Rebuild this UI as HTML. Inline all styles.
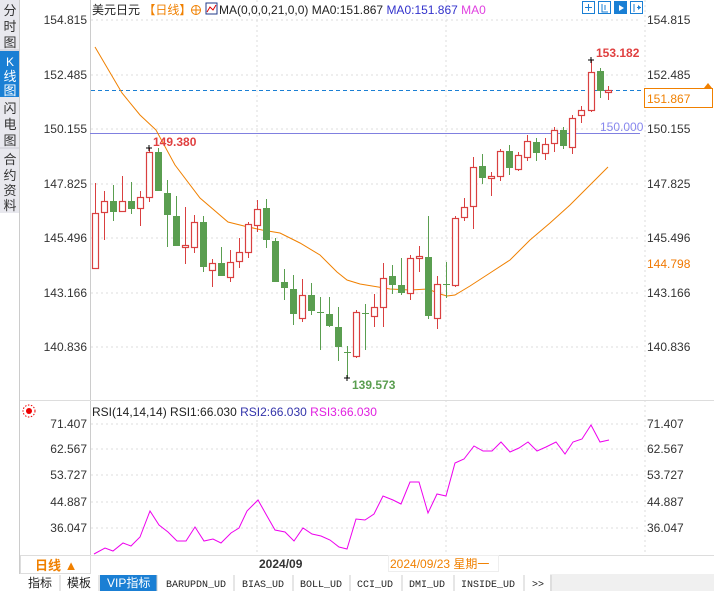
<!DOCTYPE html>
<html><head><meta charset="utf-8"><style>
body{margin:0;width:714px;height:591px;overflow:hidden;background:#fff;font-family:"Liberation Sans","Noto Sans CJK SC",sans-serif;}
svg{position:absolute;left:0;top:0}
text{font-family:"Liberation Sans","Noto Sans CJK SC",sans-serif;font-size:12px}
</style></head><body>
<svg width="714" height="591" viewBox="0 0 714 591">
<rect x="0" y="0" width="19" height="213" fill="#e8e8ee"/>
<rect x="0" y="51" width="19" height="46" fill="#1a7fd4"/>
<line x1="0" y1="50" x2="19" y2="50" stroke="#c8c8d0"/><line x1="0" y1="148" x2="19" y2="148" stroke="#c8c8d0"/>
<line x1="19.5" y1="0" x2="19.5" y2="574" stroke="#ccc"/>
<g font-size="13" fill="#333" text-anchor="middle">
<text x="10" y="15" style="font-size:13px">分</text><text x="10" y="31" style="font-size:13px">时</text><text x="10" y="47" style="font-size:13px">图</text>
<text x="10" y="66" style="font-size:12px" fill="#fff">K</text><text x="10" y="81" style="font-size:13px" fill="#fff">线</text><text x="10" y="95" style="font-size:13px" fill="#fff">图</text>
<text x="10" y="113" style="font-size:13px">闪</text><text x="10" y="129" style="font-size:13px">电</text><text x="10" y="145" style="font-size:13px">图</text>
<text x="10" y="164" style="font-size:13px">合</text><text x="10" y="180" style="font-size:13px">约</text><text x="10" y="195" style="font-size:13px">资</text><text x="10" y="210" style="font-size:13px">料</text>
</g>
<line x1="90.5" y1="0" x2="90.5" y2="574" stroke="#ccc"/>
<line x1="20" y1="400.5" x2="714" y2="400.5" stroke="#ddd"/>
<g stroke="#ddd" stroke-dasharray="2,3">
<line x1="91" y1="20" x2="640" y2="20"/><line x1="91" y1="75" x2="640" y2="75"/><line x1="91" y1="129" x2="640" y2="129"/><line x1="91" y1="184" x2="640" y2="184"/><line x1="91" y1="238" x2="640" y2="238"/><line x1="91" y1="293" x2="640" y2="293"/><line x1="91" y1="347" x2="640" y2="347"/>
<line x1="91" y1="424" x2="640" y2="424"/><line x1="91" y1="449" x2="640" y2="449"/><line x1="91" y1="475" x2="640" y2="475"/><line x1="91" y1="502" x2="640" y2="502"/><line x1="91" y1="528" x2="640" y2="528"/>
<line x1="257" y1="0" x2="257" y2="553"/><line x1="446" y1="0" x2="446" y2="553"/><line x1="645" y1="0" x2="645" y2="553"/>
</g>
<g fill="#333" text-anchor="end">
<text x="87" y="24">154.815</text><text x="87" y="79">152.485</text><text x="87" y="133">150.155</text><text x="87" y="188">147.825</text><text x="87" y="242">145.496</text><text x="87" y="297">143.166</text><text x="87" y="351">140.836</text>
<text x="87" y="428">71.407</text><text x="87" y="453">62.567</text><text x="87" y="479">53.727</text><text x="87" y="506">44.887</text><text x="87" y="532">36.047</text>
</g>
<g fill="#333">
<text x="647" y="24">154.815</text><text x="647" y="79">152.485</text><text x="647" y="133">150.155</text><text x="647" y="188">147.825</text><text x="647" y="242">145.496</text><text x="647" y="297">143.166</text><text x="647" y="351">140.836</text>
<text x="647" y="428">71.407</text><text x="647" y="453">62.567</text><text x="647" y="479">53.727</text><text x="647" y="506">44.887</text><text x="647" y="532">36.047</text>
</g>
<text x="647" y="268" fill="#f07800">144.798</text>
<text x="92" y="14" fill="#222">美元日元 <tspan fill="#f08000">【日线】</tspan></text>
<circle cx="196" cy="10" r="4.5" fill="none" stroke="#f08000"/><line x1="191" y1="10" x2="201" y2="10" stroke="#f08000"/><line x1="196" y1="5" x2="196" y2="15" stroke="#f08000"/>
<rect x="206" y="3" width="11" height="11" fill="#fff" stroke="#223a8a"/><polyline points="207,12 210,7 213,10 216,5" fill="none" stroke="#d00"/>
<text x="219" y="14" fill="#222">MA(0,0,0,21,0,0) MA0:151.867 <tspan fill="#3333cc">MA0:151.867</tspan> <tspan fill="#e040e0">MA0</tspan></text>
<g fill="none" stroke="#1a7fd4">
<rect x="582.5" y="1.5" width="12" height="12"/><rect x="598.5" y="1.5" width="12" height="12"/><rect x="614.5" y="1.5" width="12" height="12" fill="#1a7fd4"/><rect x="630.5" y="1.5" width="12" height="12"/>
<path d="M588.5 4v7M585 7.5h7M602 4v8h6M605 5v5M618 4v8h6M634 4v8M637 7.5h4" /></g>
<path d="M619 5l5 3-5 3z" fill="#fff"/><path d="M638 5l3 2.5-3 2.5z" fill="#1a7fd4"/>
<line x1="91" y1="90.5" x2="705" y2="90.5" stroke="#1a7fd4" stroke-dasharray="4,3"/>
<line x1="90" y1="133.5" x2="640" y2="133.5" stroke="#8080e0"/>
<text x="600" y="131" fill="#8888ee">150.000</text>
<rect x="644.5" y="88.5" width="68" height="19" fill="#fff" stroke="#f08000"/>
<text x="647" y="103" fill="#f08000">151.867</text>
<path d="M704 88l4-5 4 5z" fill="#f08000"/>
<polyline fill="none" stroke="#f08000" points="95,47 122,93 140,115 156,130 175,165 200,198 228,222 244,226 262,230 280,233 300,243 320,255 337,272 347,280 360,284 390,289 410,290 428,289 440,294 447,296 455,295 470,286 490,273 510,260 530,240 550,223 570,205 590,185 608,167"/>
<g id="c"></g>
<circle cx="29" cy="411" r="3" fill="#e00"/><circle cx="29" cy="411" r="6" fill="none" stroke="#e00" stroke-dasharray="1.5,1.5"/>
<text x="92" y="416" fill="#222">RSI(14,14,14) RSI1:66.030 <tspan fill="#3333aa">RSI2:66.030</tspan> <tspan fill="#e020e0">RSI3:66.030</tspan></text>
<polyline fill="none" stroke="#ee00ee" points="94,554 105,548 113,551 123,543 131,546 140,537 150,511 159,525 168,532 177,541 186,541 195,527 204,541 213,539 221,543 231,533 239,528 247,511 258,500 267,516 275,530 285,532 294,541 303,528 312,534 321,536 330,540 339,547 347,549 356,519 365,520 374,514 383,496 393,500 401,504 410,482 419,482 428,513 437,494 446,496 455,463 464,459 474,446 483,451 492,451 501,442 510,452 519,448 528,442 537,451 546,447 556,442 565,454 573,442 582,439 591,425 600,442 609,440"/>
<line x1="20" y1="555.5" x2="714" y2="555.5" stroke="#ddd"/>
<rect x="20.5" y="555.5" width="70" height="18" fill="#fff" stroke="#ddd"/>
<text x="35" y="570" fill="#f08000" style="font-size:13px;font-weight:bold">日线 ▲</text>
<text x="259" y="568" fill="#333" style="font-weight:bold">2024/09</text>
<rect x="388.5" y="555.5" width="110" height="16" fill="#fff" stroke="#eee"/>
<text x="390" y="568" fill="#f08000">2024/09/23 星期一</text>
<rect x="20" y="574" width="694" height="17" fill="#f0f0f0"/>
<rect x="20" y="574" width="530" height="17" fill="#fff"/>
<rect x="100" y="575" width="57" height="16" fill="#1a7fd4"/>
<g stroke="#ccc"><line x1="60" y1="575" x2="60" y2="591"/><line x1="99" y1="575" x2="99" y2="591"/><line x1="157" y1="575" x2="157" y2="591"/><line x1="234" y1="575" x2="234" y2="591"/><line x1="293" y1="575" x2="293" y2="591"/><line x1="350" y1="575" x2="350" y2="591"/><line x1="402" y1="575" x2="402" y2="591"/><line x1="454" y1="575" x2="454" y2="591"/><line x1="524" y1="575" x2="524" y2="591"/><line x1="551" y1="575" x2="551" y2="591"/></g>
<g fill="#222">
<text x="28" y="587">指标</text><text x="67" y="587">模板</text><text x="107" y="587" fill="#fff">VIP指标</text>
<text x="166" y="587" style="font-family:'Liberation Mono',monospace;font-size:10px">BARUPDN_UD</text><text x="242" y="587" style="font-family:'Liberation Mono',monospace;font-size:10px">BIAS_UD</text><text x="300" y="587" style="font-family:'Liberation Mono',monospace;font-size:10px">BOLL_UD</text><text x="357" y="587" style="font-family:'Liberation Mono',monospace;font-size:10px">CCI_UD</text><text x="409" y="587" style="font-family:'Liberation Mono',monospace;font-size:10px">DMI_UD</text><text x="461" y="587" style="font-family:'Liberation Mono',monospace;font-size:10px">INSIDE_UD</text><text x="532" y="587" style="font-family:'Liberation Mono',monospace;font-size:10px">&gt;&gt;</text>
</g>
<text x="153" y="146" fill="#e04040" style="font-weight:bold">149.380</text>
<text x="596" y="57" fill="#e04040" style="font-weight:bold">153.182</text>
<text x="352" y="389" fill="#5a9e50" style="font-weight:bold">139.573</text>
<path d="M146 148h6M149 145v6M588 60h6M591 57v6M344 378h6M347 375v6" stroke="#000"/>
</svg>
<script>
var d=[[95,213,268,183,268,1],[104,201,212,191,240,1],[113,201,212,185,221,0],[122,201,211,176,211,1],[131,201,209,182,214,0],[140,197,208,191,226,1],[149,152,197,148,202,1],[158,152,191,148,191,0],[167,193,215,180,247,0],[176,216,246,196,246,0],[185,245,247,207,264,1],[194,222,247,215,253,1],[203,222,267,216,272,0],[212,263,270,259,287,1],[221,263,276,247,276,0],[230,262,277,250,282,1],[239,252,261,238,268,1],[248,224,252,222,258,1],[257,209,225,200,232,1],[266,208,240,199,248,0],[275,241,282,238,282,0],[284,282,288,269,300,0],[293,289,314,275,325,0],[302,295,318,279,322,1],[311,295,311,283,315,0],[320,312,313,297,350,0],[329,314,326,297,327,0],[338,327,347,307,361,0],[347,352,353,346,378,0],[356,312,356,310,358,1],[365,313,314,304,350,0],[374,307,316,294,327,1],[383,278,307,263,327,1],[392,276,285,265,294,0],[401,285,293,258,295,0],[410,258,293,255,300,1],[419,256,258,246,272,1],[428,257,316,216,319,0],[437,284,318,276,329,1],[446,284,285,262,298,0],[455,218,285,216,287,1],[464,207,217,198,221,1],[473,167,206,157,229,1],[482,166,178,154,184,0],[491,176,178,172,196,1],[500,151,176,149,181,1],[509,151,168,145,175,0],[518,155,169,152,171,1],[527,141,157,135,161,1],[536,142,153,138,161,0],[545,144,153,138,160,1],[554,130,143,127,152,1],[563,130,146,127,149,0],[572,118,147,115,154,1],[581,110,115,106,123,1],[591,72,110,60,112,1],[600,71,91,68,98,0],[608,90,92,86,100,1]];
var s='';d.forEach(function(c){var x=c[0]+.5,col=c[5]?'#d94040':'#5a9e50';
s+='<line x1="'+x+'" y1="'+c[3]+'" x2="'+x+'" y2="'+c[4]+'" stroke="'+col+'"/>';
var h=Math.max(c[2]-c[1],1);
if(c[5])s+='<rect x="'+(c[0]-2.5)+'" y="'+(c[1]+.5)+'" width="6" height="'+h+'" fill="#fff" stroke="'+col+'" stroke-width="1.2"/>';
else s+='<rect x="'+(c[0]-3)+'" y="'+c[1]+'" width="7" height="'+h+'" fill="'+col+'"/>';});
document.getElementById('c').innerHTML=s;
</script>
</body></html>
